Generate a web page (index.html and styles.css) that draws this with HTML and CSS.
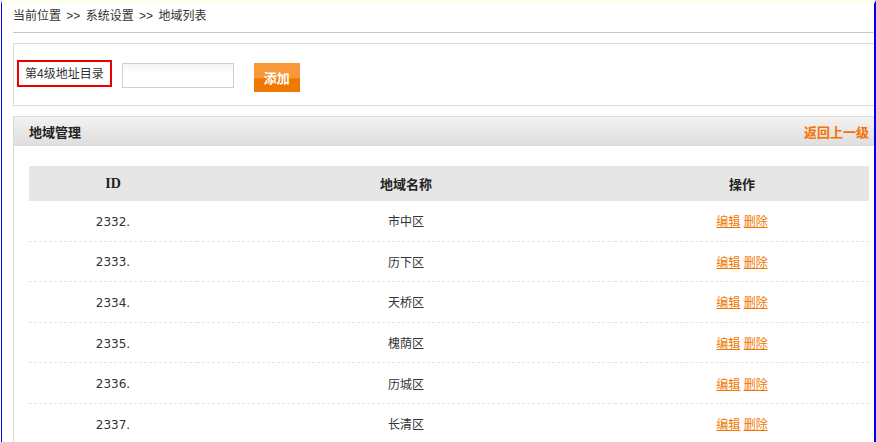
FILE: index.html
```html
<!DOCTYPE html>
<html lang="zh-CN">
<head>
  <meta charset="UTF-8">
  <title>地域列表</title>
  <link rel="stylesheet" href="styles.css">
</head>
<body>
  <div class="frame">
    <div class="crumb">当前位置 <span class="sep">&gt;&gt;</span> 系统设置 <span class="sep">&gt;&gt;</span> 地域列表</div>

    <!-- add form -->
    <div class="add-box">
      <span class="level">第4级地址目录</span>
      <input type="text" class="txt">
      <button type="button" class="btn-add">添加</button>
    </div>

    <div class="panel">
      <div class="panel-head">
        <span class="title">地域管理</span>
        <a href="#" class="back">返回上一级</a>
      </div>
      <div class="panel-body">
        <table class="list">
          <tr>
            <th class="c-id">ID</th>
            <th class="c-name">地域名称</th>
            <th class="c-op">操作</th>
          </tr>
          <tr><td class="num">2332.</td><td>市中区</td><td><a href="#">编辑</a> <a href="#">删除</a></td></tr>
          <tr><td class="num">2333.</td><td>历下区</td><td><a href="#">编辑</a> <a href="#">删除</a></td></tr>
          <tr><td class="num">2334.</td><td>天桥区</td><td><a href="#">编辑</a> <a href="#">删除</a></td></tr>
          <tr><td class="num">2335.</td><td>槐荫区</td><td><a href="#">编辑</a> <a href="#">删除</a></td></tr>
          <tr><td class="num">2336.</td><td>历城区</td><td><a href="#">编辑</a> <a href="#">删除</a></td></tr>
          <tr><td class="num">2337.</td><td>长清区</td><td><a href="#">编辑</a> <a href="#">删除</a></td></tr>
        </table>
      </div>
    </div>
  </div>
</body>
</html>
```

FILE: styles.css
```css
body {
  margin: 0;
  background: #fff;
  color: #333;
  font-family: "Liberation Sans", "Noto Sans CJK SC", sans-serif;
  font-size: 12px;
}
.frame {
  margin-left: 1px;
  width: 875px;
  height: 442px;
  border-left: 1px solid #0000ee;
  border-right: 2px solid #0000ee;
  border-top: 4px solid #fffdf0;
  padding-left: 11px;
  box-sizing: border-box;
  overflow: hidden;
}
.crumb {
  height: 28px;
  line-height: 24px;
  border-bottom: 1px solid #c8c8c8;
}
.crumb .sep {
  margin: 0 2px;
}
.add-box {
  margin-top: 10px;
  height: 61px;
  border: 1px solid #dcdcdc;
  border-right: none;
  display: flex;
  align-items: center;
  padding-left: 3px;
}
.level {
  display: inline-block;
  border: 2px solid #e00;
  height: 23px;
  line-height: 24px;
  padding: 0 6px;
  margin-top: -3px;
  color: #333;
}
.txt {
  margin-left: 10px;
  width: 112px;
  height: 25px;
  box-sizing: border-box;
  border: 1px solid #d0d0d0;
  background: linear-gradient(#f4f4f4, #fff 40%);
  margin-top: 1px;
}
.btn-add {
  margin-left: 20px;
  width: 46px;
  height: 29px;
  border: none;
  background: linear-gradient(#f89a3a 0%, #f7963a 50%, #f07800 55%, #f07800 100%);
  color: #fff;
  font-weight: bold;
  font-size: 13px;
  font-family: "Liberation Sans", "Noto Sans CJK SC", sans-serif;
  margin-top: 5px;
  padding: 0;
}
.panel {
  margin-top: 10px;
  border-left: 1px solid #dcdcdc;
  height: 400px;
}
.panel-head {
  height: 29px;
  border-top: 1px solid #dcdcdc;
  background: linear-gradient(#f2f2f2, #dedede);
  display: flex;
  justify-content: space-between;
  align-items: center;
  padding: 0 5px 0 15px;
  font-size: 13px;
}
.title {
  font-weight: bold;
  color: #222;
}
.back {
  color: #f77000;
  font-weight: bold;
  text-decoration: none;
}
.panel-body {
  padding: 20px 4px 0 15px;
}
.list {
  width: 840px;
  border-collapse: collapse;
}
.list th {
  height: 35px;
  background: #e6e6e6;
  font-family: "Liberation Serif", "Noto Sans CJK SC", serif;
  font-size: 13px;
  color: #222;
  padding: 0;
}
.list th.c-id {
  font-size: 14px;
}
.c-id { width: 168px; }
.c-name { width: 418px; }
.list td {
  height: 39.6px;
  text-align: center;
  border-bottom: 1px dashed #e4e4e4;
  padding: 0;
  color: #333;
}
.list td.num {
  font-family: "DejaVu Sans", sans-serif;
  font-size: 12px;
  height: 37.6px;
  padding-top: 2px;
}
.list td a {
  color: #f07800;
}
```
